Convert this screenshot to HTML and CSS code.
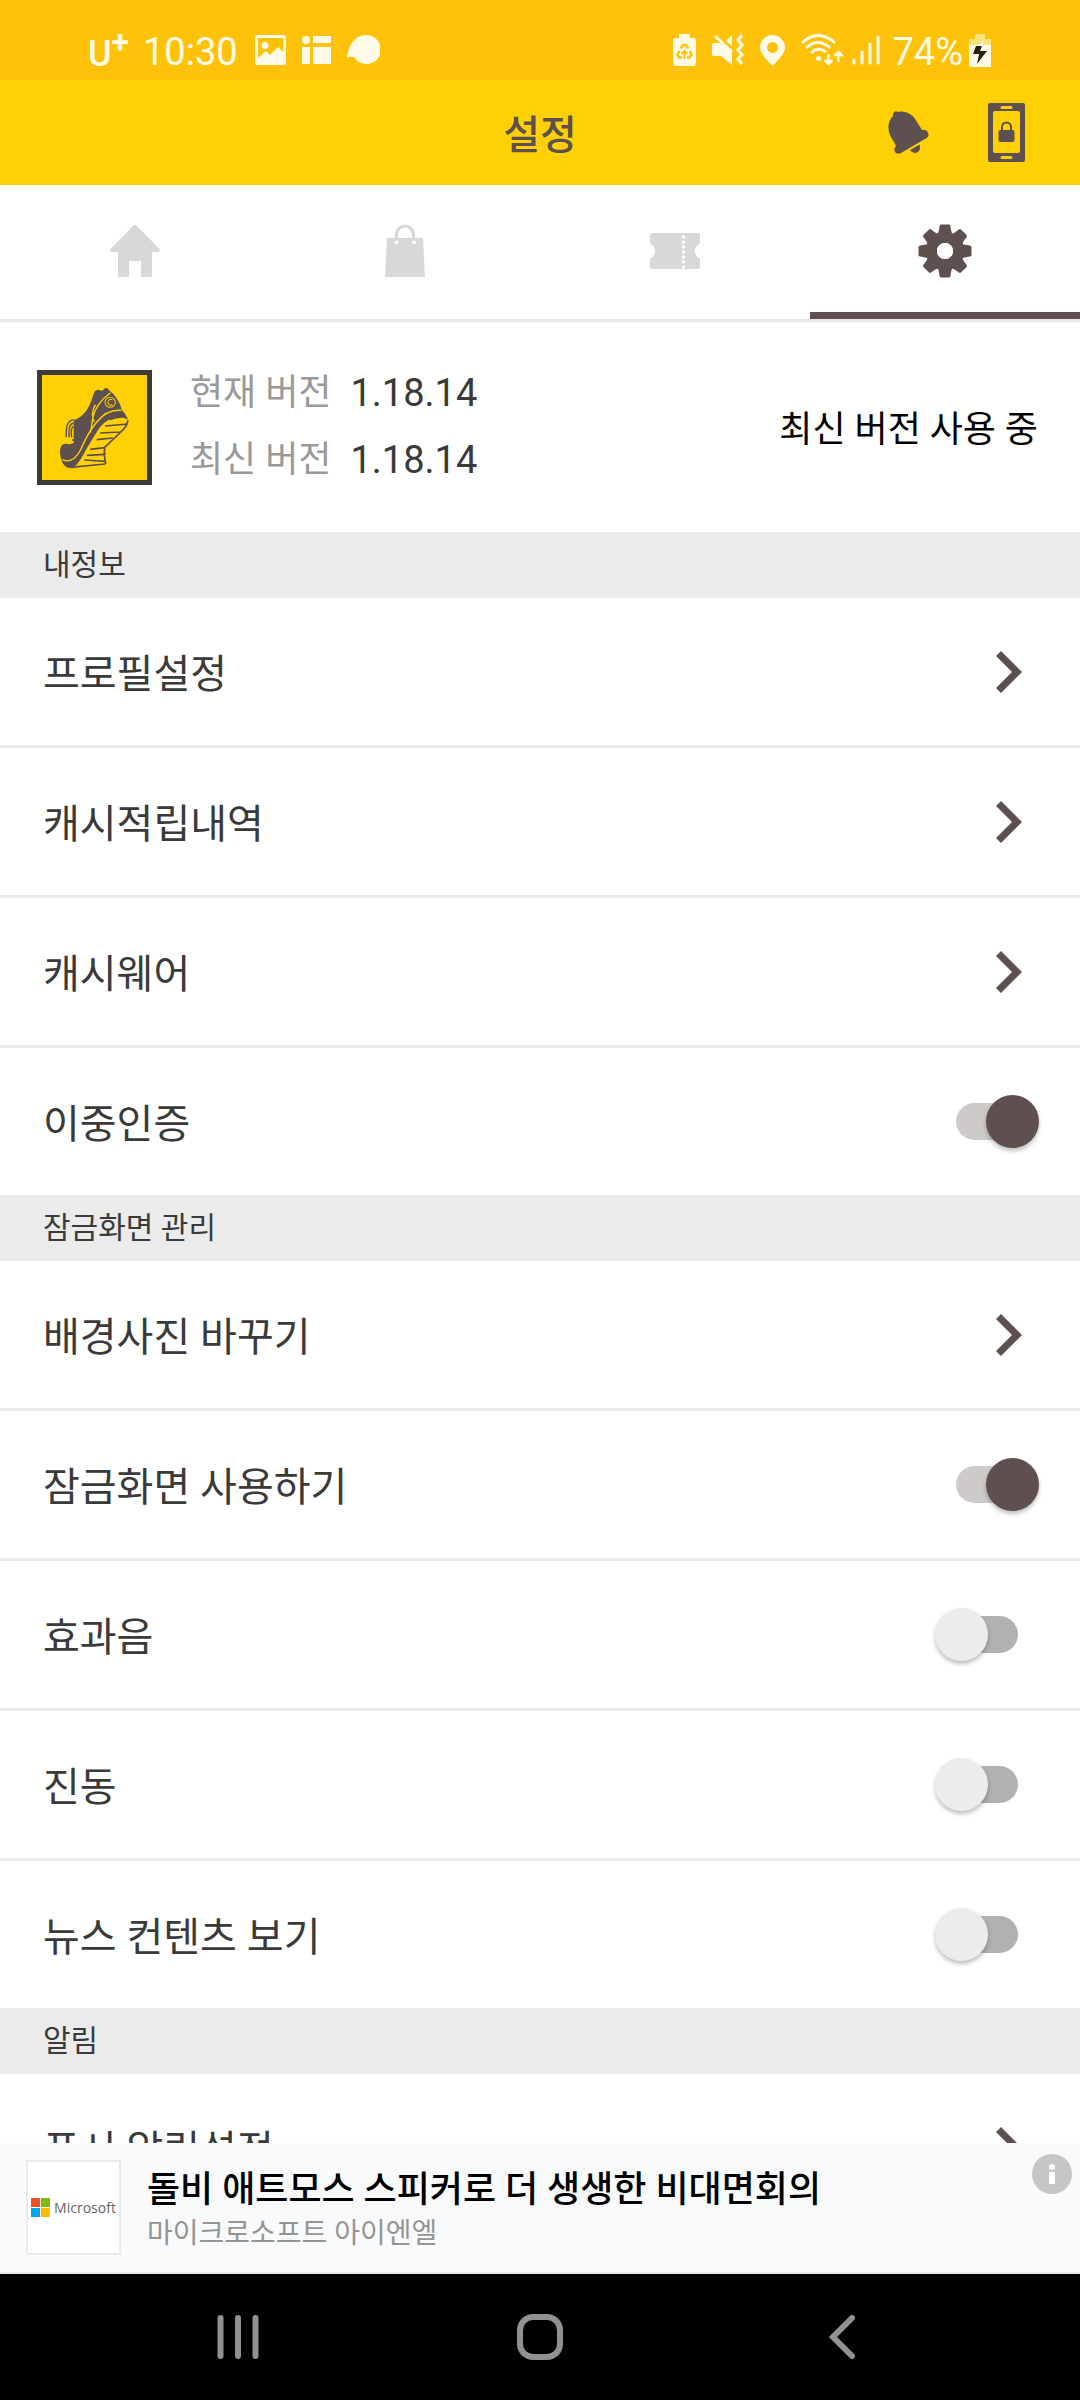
FILE: index.html
```html
<!DOCTYPE html>
<html lang="ko">
<head>
<meta charset="utf-8">
<meta name="viewport" content="width=device-width, initial-scale=1">
<title>설정</title>
<link rel="stylesheet" href="styles.css">
</head>
<body>
<div class="status">
  <div class="status-side">
    <span class="carrier">U<span class="carrier-plus">+</span></span>
    <span class="status-text">10:30</span>
    <span class="notifications">
      <svg width="31" height="30" viewBox="0 0 31 30" fill="currentColor"><path fill-rule="evenodd" d="M3 0H28a3 3 0 0 1 3 3V27a3 3 0 0 1-3 3H3a3 3 0 0 1-3-3V3A3 3 0 0 1 3 0ZM3 3V23L11 16l4 4 8-8 5 5V3ZM10 7a3.500 3.500 0 1 1 0 7 3.500 3.500 0 0 1 0-7Z"/></svg>
      <svg width="29" height="28" viewBox="0 0 29 28" fill="currentColor"><circle cx="4" cy="4" r="4"/><path d="M11 0H29V7H11ZM0 11H8V28H0ZM11 11H29V28H11Z"/></svg>
      <svg width="33" height="30" viewBox="0 0 33 30" fill="currentColor"><path d="M19 0A14.500 14.500 0 1 1 7 22Q3 21 0 23C1 12 7 0 19 0Z"/></svg>
    </span>
  </div>
  <div class="status-side status-right">
    <svg width="23" height="32" viewBox="0 0 23 32"><path fill="currentColor" d="M6 0H17V4H20a3 3 0 0 1 3 3V29a3 3 0 0 1-3 3H3a3 3 0 0 1-3-3V7A3 3 0 0 1 3 4H6Z"/><g fill="none" stroke="#ffc20a" stroke-width="2.500"><path d="M7.500 14.500 10 11h3l2.500 3.500M17 17l1.500 3.500-2 3H14M9 23.500H6l-1.500-3L6.500 17"/><path d="M11.500 25V17M8.500 20l3-3 3 3" stroke-width="2"/></g></svg>
    <svg width="32" height="32" viewBox="0 0 32 32" fill="currentColor"><path d="M0 11Q0 9 2 9H8L20 19V31L9 22H2Q0 22 0 20ZM14 7 20 1V12Z"/><path d="M3 2 20 18M30 1l-4 5 4 5-4 5 4 5-4 4 4 5" fill="none" stroke="currentColor" stroke-width="3"/></svg>
    <svg width="25" height="31" viewBox="0 0 25 31" fill="currentColor"><path fill-rule="evenodd" d="M12.500 0A12.500 12.500 0 0 1 25 12.500C25 19 17 26 12.500 31 8 26 0 19 0 12.500A12.500 12.500 0 0 1 12.500 0ZM12.500 7a5.500 5.500 0 1 0 0 11 5.500 5.500 0 0 0 0-11Z"/></svg>
    <span class="network">
      <svg width="42" height="32" viewBox="0 0 42 32" fill="none" stroke="currentColor" stroke-width="3"><path d="M1 9Q17-6 34 9M5 14Q17 3 29 14M10 19Q17 12 25 18"/><circle cx="17.500" cy="24.500" r="2.500" fill="currentColor" stroke="none"/><path d="M27.500 20V29M23.500 26l4 4 4-4M37.500 28V19M33.500 22l4-4 4 4" stroke-width="2.500"/></svg>
      <svg width="28" height="30" viewBox="0 0 28 30" fill="none" stroke="currentColor" stroke-width="3" stroke-linecap="round"><path d="M2 25V28M10 17V28M18 9V28M26 2V28"/></svg>
    </span>
    <span class="battery">
      <span class="status-text">74%</span>
      <svg width="22" height="33" viewBox="0 0 22 33"><path fill="#ffe27a" d="M6 0H16V5H22V12H0V5H6Z"/><path fill="currentColor" d="M0 11H22V33H2a2 2 0 0 1-2-2Z"/><path fill="currentColor" d="M10 11 14 7 15 11Z"/><path fill="#28210f" d="M7 12H13L11 17H18L8 30L10 20H4Z"/></svg>
    </span>
  </div>
</div>

<header class="appbar">
  <h1>설정</h1>
  <div class="appbar-actions">
    <button type="button" aria-label="알림"><svg width="41" height="44" viewBox="0 0 41 44" fill="currentColor"><path d="M5 3Q6-1 10 1C19-1 26 5 29 11L34 19Q39 18 40.500 23Q41 26 37 28L13 42Q8 44 6.500 40Q6 37 8 35C6 29 0 25 .500 15Q1 9 5 5Z"/><path d="M22 39 31.500 33.500Q33 38 30 41 25 43.500 22 39Z"/></svg></button>
    <button type="button" aria-label="잠금화면"><svg width="37" height="59" viewBox="0 0 37 59" fill="currentColor"><path fill-rule="evenodd" d="M2 0H35a2 2 0 0 1 2 2V57a2 2 0 0 1-2 2H2a2 2 0 0 1-2-2V2A2 2 0 0 1 2 0ZM7 8a2 2 0 0 0-2 2V48a2 2 0 0 0 2 2H30a2 2 0 0 0 2-2V10a2 2 0 0 0-2-2ZM14 3a1.500 1.500 0 0 0 0 3h9a1.500 1.500 0 0 0 0-3ZM14 53a1.500 1.500 0 0 0 0 3h9a1.500 1.500 0 0 0 0-3Z"/><rect x="10.500" y="27" width="16" height="12" rx="2"/><path d="M14 28V24a4.500 4.500 0 0 1 9 0v4" fill="none" stroke="currentColor" stroke-width="2"/></svg></button>
  </div>
</header>

<nav class="tabs">
  <a href="#home" aria-label="홈"><svg width="52" height="54" viewBox="0 0 52 54" fill="currentColor"><path d="M24.500 1.500Q26 0 27.500 1.500L50.500 25Q52 28 49 28H43V51Q43 53 42 53H33Q32 53 32 52V37H20V52Q20 53 19 53H10Q9 53 9 52V28H3Q0 28 1.500 25Z"/></svg></a>
  <a href="#shop" aria-label="쇼핑"><svg width="42" height="54" viewBox="0 0 42 54" fill="currentColor"><path fill-rule="evenodd" d="M3 14H39L41 53H1ZM12.500 16.500a2 2 0 1 0 0 4 2 2 0 0 0 0-4ZM30 16.500a2 2 0 1 0 0 4 2 2 0 0 0 0-4Z"/><path d="M12.500 15V11a8.500 9 0 0 1 17 0v4" fill="none" stroke="currentColor" stroke-width="3"/></svg></a>
  <a href="#coupon" aria-label="쿠폰"><svg width="52" height="38" viewBox="0 0 52 38" fill="currentColor"><path d="M3 1H49Q51 1 51 3V11Q46 14 46 19T51 27V35Q51 37 49 37H3Q1 37 1 35V27Q6 24 6 19T1 11V3Q1 1 3 1Z"/><path d="M34.500 3.500V38" stroke="#fff" stroke-width="3" stroke-dasharray="3 2"/></svg></a>
  <a href="#settings" aria-label="설정" aria-current="page"><svg width="54" height="54" viewBox="-27 -27 54 54" fill="currentColor"><path id="tooth" d="M-9-14Q-6-18-5.500-25Q-5-26.500-4-26.500H4Q5-26.500 5.500-25Q6-18 9-14ZM-9 14Q-6 18-5.500 25Q-5 26.500-4 26.500H4Q5 26.500 5.500 25Q6 18 9 14Z"/><use href="#tooth" transform="rotate(90)"/><use href="#tooth" transform="rotate(45)"/><use href="#tooth" transform="rotate(135)"/><circle r="13.500" fill="none" stroke="currentColor" stroke-width="11"/><circle r="8" fill="#fff"/></svg></a>
</nav>

<main class="content">
  <section class="version">
    <svg class="app-icon" viewBox="122 105 305 315" preserveAspectRatio="none">
      <path fill="#5d504f" d="M275 154Q282 146 291 151Q297 155 303 146Q311 140 317 151Q343 171 354 209Q366 221 372 240Q366 229 350 231Q318 228 290 262Q266 300 238 351Q223 380 207 384Q187 385 179 362Q169 331 180 315Q188 308 203 313L214 309V240Q249 230 266 180Z"/>
      <path fill="none" stroke="#ffd104" stroke-width="4" d="M321 158Q279 190 270 231Q266 260 263 277M353 211Q311 207 281 246Q254 280 234 330Q211 373 181 359M274 246Q262 222 277 194"/>
      <circle cx="320" cy="187" r="15" fill="none" stroke="#ffd104" stroke-width="3"/>
      <path fill="none" stroke="#ffd104" stroke-width="3" d="M326 179Q315 175 314 187T327 194"/>
      <path fill="none" stroke="#5d504f" stroke-width="4" d="M214 239Q189 242 193 291M213 249Q197 252 201 292M213 259Q204 264 208 292M209 300H215"/>
      <path fill="none" stroke="#5d504f" stroke-width="5" d="M318 239Q360 225 370 236M305 258 370 252M291 279 352 276M281 299 327 294M262 328 305 323M252 346 307 343M245 360 307 364M205 382 306 372M371 240Q372 255 351 276Q329 298 304 322L303 345 307 372"/>
    </svg>
    <dl>
      <dt>현재 버전</dt><dd>1.18.14</dd>
      <dt>최신 버전</dt><dd>1.18.14</dd>
    </dl>
    <p>최신 버전 사용 중</p>
  </section>

  <h2>내정보</h2>
  <ul>
    <li><a class="row" href="#profile"><span>프로필설정</span><svg class="chevron" viewBox="0 0 26 42"><path d="M5 0 26 21 5 42 0 37 16 21 0 5Z"/></svg></a></li>
    <li><a class="row" href="#cash"><span>캐시적립내역</span><svg class="chevron" viewBox="0 0 26 42"><path d="M5 0 26 21 5 42 0 37 16 21 0 5Z"/></svg></a></li>
    <li><a class="row" href="#wear"><span>캐시웨어</span><svg class="chevron" viewBox="0 0 26 42"><path d="M5 0 26 21 5 42 0 37 16 21 0 5Z"/></svg></a></li>
    <li><label class="row"><span>이중인증</span><input type="checkbox" role="switch" checked></label></li>
  </ul>

  <h2>잠금화면 관리</h2>
  <ul>
    <li><a class="row" href="#wallpaper"><span>배경사진 바꾸기</span><svg class="chevron" viewBox="0 0 26 42"><path d="M5 0 26 21 5 42 0 37 16 21 0 5Z"/></svg></a></li>
    <li><label class="row"><span>잠금화면 사용하기</span><input type="checkbox" role="switch" checked></label></li>
    <li><label class="row"><span>효과음</span><input type="checkbox" role="switch"></label></li>
    <li><label class="row"><span>진동</span><input type="checkbox" role="switch"></label></li>
    <li><label class="row"><span>뉴스 컨텐츠 보기</span><input type="checkbox" role="switch"></label></li>
  </ul>

  <h2>알림</h2>
  <ul>
    <li><a class="row" href="#push"><span>푸시 알림설정</span><svg class="chevron" viewBox="0 0 26 42"><path d="M5 0 26 21 5 42 0 37 16 21 0 5Z"/></svg></a></li>
  </ul>
</main>

<aside class="ad">
  <div class="ad-logo">
    <svg width="19" height="19" viewBox="0 0 19 19"><path fill="#f25022" d="M0 0H9V9H0Z"/><path fill="#7fba00" d="M10 0H19V9H10Z"/><path fill="#00a4ef" d="M0 10H9V19H0Z"/><path fill="#ffb900" d="M10 10H19V19H10Z"/></svg>
    <span>Microsoft</span>
  </div>
  <div class="ad-text">
    <strong>돌비 애트모스 스피커로 더 생생한 비대면회의</strong>
    <span>마이크로소프트 아이엔엘</span>
  </div>
  <button class="ad-info" type="button" aria-label="광고 정보"><svg width="40" height="40" viewBox="0 0 40 40"><circle cx="20" cy="20" r="20" fill="#c5c6c8"/><circle cx="20" cy="13" r="3" fill="#fff"/><path fill="#fff" d="M17 18H23V30H17Z"/></svg></button>
</aside>

<nav class="sysnav">
  <button type="button" aria-label="최근 앱"><svg width="42" height="44" viewBox="0 0 42 44"><path d="M3.500 3V41M21 3V41M38.500 3V41"/></svg></button>
  <button type="button" aria-label="홈 화면"><svg width="46" height="46" viewBox="0 0 46 46"><rect x="3" y="3" width="40" height="40" rx="13"/></svg></button>
  <button type="button" aria-label="뒤로"><svg width="26" height="44" viewBox="0 0 26 44"><path d="M23 3 4 22 23 41"/></svg></button>
</nav>
</body>
</html>
```
FILE: styles.css
```css
* { box-sizing: border-box; margin: 0; padding: 0; }

body {
  display: flex;
  flex-direction: column;
  height: 100vh;
  background: #fff;
  color: #3a3a3a;
  font-family: Roboto, "Noto Sans CJK KR", sans-serif;
}

svg { display: block; flex: none; }
ul { list-style: none; }
a { color: inherit; text-decoration: none; }
button { border: 0; background: none; color: inherit; font: inherit; }

.status {
  display: flex;
  justify-content: space-between;
  flex: none;
  height: 80px;
  padding: 20px 89px 0 88px;
  background: #ffc20a;
  color: #fffbe8;
}
.status-side { display: flex; align-items: center; gap: 14px; height: 60px; }
.carrier { display: flex; padding-top: 8px; font-size: 36px; font-weight: 500; line-height: 60px; }
.carrier-plus { font-size: 32px; font-weight: 700; line-height: 36px; }
.status-text { padding-top: 4px; font-size: 38px; line-height: 60px; }
.notifications { display: flex; align-items: center; gap: 16px; padding-left: 3px; }
.status-right { gap: 16px; }
.network { display: flex; align-items: center; gap: 9px; }
.battery { display: flex; align-items: center; gap: 6px; margin-left: -4px; }

.appbar {
  display: grid;
  grid-template-columns: 1fr auto 1fr;
  align-items: center;
  flex: none;
  height: 105px;
  padding: 0 55px;
  background: #ffd104;
  color: #5d504f;
}
.appbar h1 { grid-column: 2; padding-top: 6px; font-size: 40px; font-weight: 500; line-height: 60px; }
.appbar-actions { display: flex; align-items: center; justify-content: flex-end; gap: 59px; }

.tabs {
  display: grid;
  grid-template-columns: repeat(4, 1fr);
  flex: none;
  height: 137px;
  border-bottom: 3px solid #e8e8e8;
  color: #d8d8d8;
}
.tabs a { display: flex; align-items: center; justify-content: center; padding-bottom: 2px; }
.tabs a[aria-current] { color: #5d504f; box-shadow: inset 0 -7px #5d504f; }

.content { flex: 1; min-height: 0; overflow-y: auto; scrollbar-width: none; }

.version {
  display: flex;
  align-items: center;
  height: 210px;
  padding: 0 42px 0 37px;
  font-size: 36px;
}
.app-icon { width: 115px; height: 115px; border: 5px solid #3a3a38; background: #ffd104; }
.version dl {
  display: grid;
  grid-template-columns: auto auto;
  column-gap: 19px;
  margin: 0 auto 0 38px;
  line-height: 67px;
}
.version dt { color: #999; }
.version dd { font-size: 38px; }
.version p { padding-top: 6px; color: #000; line-height: 60px; }

h2 {
  height: 66px;
  padding-left: 43px;
  background: #ebebeb;
  font-size: 30px;
  font-weight: 400;
  line-height: 66px;
}

li + li { border-top: 3px solid #ebebeb; }
.row {
  display: flex;
  align-items: center;
  justify-content: space-between;
  height: 147px;
  padding: 0 41px 0 43px;
  font-size: 40px;
  line-height: 60px;
}
.row span { padding-top: 6px; }
.chevron { width: 26px; height: 42px; margin-right: 17px; fill: #5d504f; }

input[role="switch"] {
  display: grid;
  align-items: center;
  width: 104px;
  height: 53px;
  appearance: none;
}
input[role="switch"]::before,
input[role="switch"]::after { content: ""; grid-area: 1 / 1; }
input[role="switch"]::before {
  justify-self: center;
  width: 62px;
  height: 37px;
  border-radius: 19px;
  background: #b1b1b1;
}
input[role="switch"]::after {
  width: 53px;
  height: 53px;
  border-radius: 50%;
  background: #ececec;
  box-shadow: 0 3px 4px rgba(0, 0, 0, 0.25);
}
input[role="switch"]:checked::before { background: #cecac9; }
input[role="switch"]:checked::after { justify-self: end; background: #5d504f; }

.ad {
  position: relative;
  display: flex;
  align-items: center;
  flex: none;
  gap: 26px;
  height: 131px;
  padding-left: 26px;
  border-bottom: 2px solid #ebedef;
  background: #f9fafc;
}
.ad-logo {
  display: flex;
  align-items: center;
  justify-content: center;
  gap: 4px;
  width: 95px;
  height: 95px;
  border: 2px solid #ebebeb;
  background: #fff;
  color: #666;
  font: 500 14px "Open Sans", sans-serif;
}
.ad-text { display: flex; flex-direction: column; padding-top: 4px; }
.ad-text strong { color: #000; font-size: 36px; font-weight: 500; line-height: 48px; }
.ad-text span { color: #959595; font-size: 28px; line-height: 40px; }
.ad-info { position: absolute; top: 11px; right: 8px; }

.sysnav {
  display: grid;
  grid-template-columns: repeat(3, 28%);
  justify-content: center;
  flex: none;
  height: 126px;
  background: #000;
}
.sysnav button { display: flex; align-items: center; justify-content: center; }
.sysnav svg { fill: none; stroke: #919191; stroke-width: 6; stroke-linecap: round; }
```
